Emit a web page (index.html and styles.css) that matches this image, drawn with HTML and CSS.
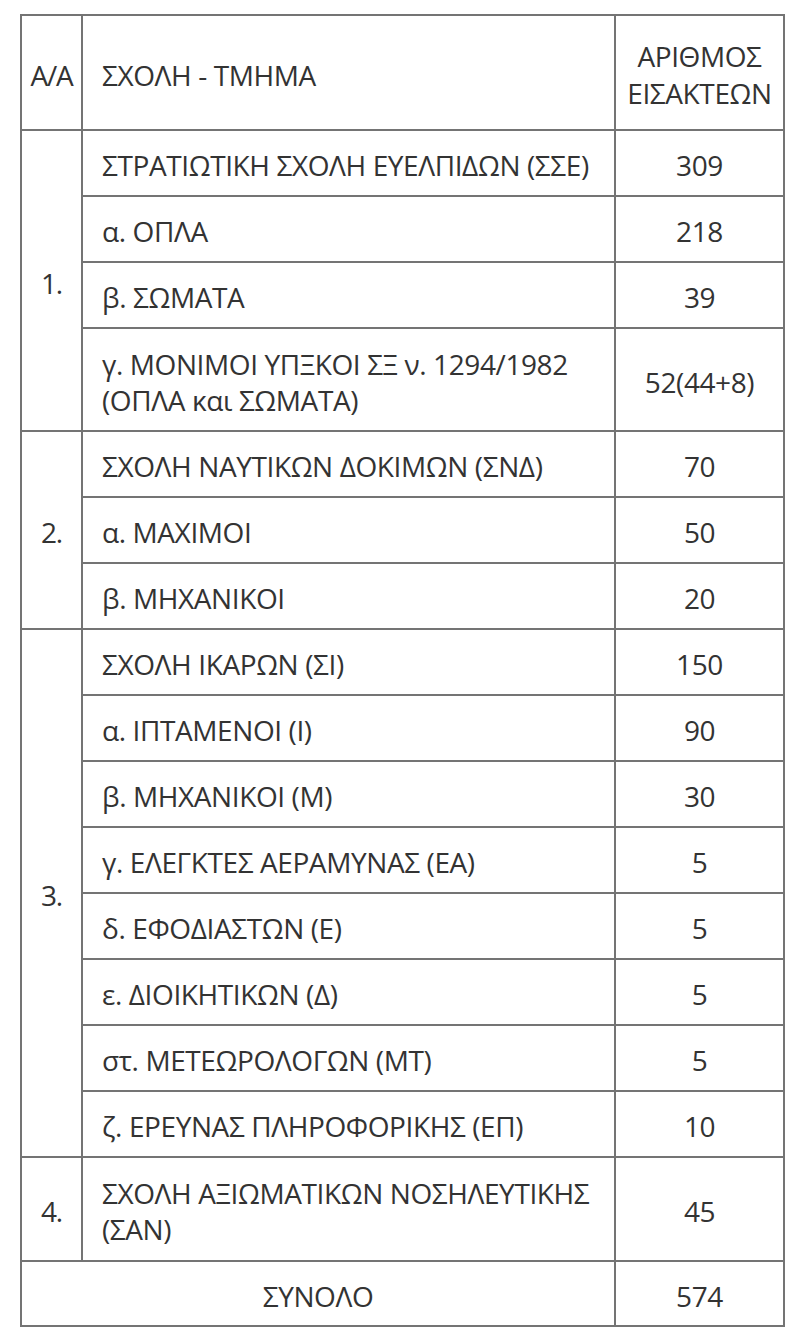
FILE: index.html
```html
<!DOCTYPE html>
<html lang="el">
<head>
<meta charset="utf-8">
<title>Αριθμός εισακτέων</title>
<link rel="stylesheet" href="styles.css">
</head>
<body>
<div class="page">
<table class="quota">
  <colgroup>
    <col class="c-aa">
    <col class="c-name">
    <col class="c-num">
  </colgroup>
  <thead>
    <tr class="h-head">
      <th class="aa">Α/Α</th>
      <th class="name">ΣΧΟΛΗ - ΤΜΗΜΑ</th>
      <th class="num head-num">ΑΡΙΘΜΟΣ<br>ΕΙΣΑΚΤΕΩΝ</th>
    </tr>
  </thead>
  <tbody>
    <tr class="h1"><td class="aa" rowspan="4">1.</td><td class="name">ΣΤΡΑΤΙΩΤΙΚΗ ΣΧΟΛΗ ΕΥΕΛΠΙΔΩΝ (ΣΣΕ)</td><td class="num">309</td></tr>
    <tr class="h1"><td class="name">α. ΟΠΛΑ</td><td class="num">218</td></tr>
    <tr class="h1"><td class="name">β. ΣΩΜΑΤΑ</td><td class="num">39</td></tr>
    <tr class="h2"><td class="name">γ. ΜΟΝΙΜΟΙ ΥΠΞΚΟΙ ΣΞ ν. 1294/1982<br>(ΟΠΛΑ και ΣΩΜΑΤΑ)</td><td class="num">52(44+8)</td></tr>

    <tr class="h1"><td class="aa" rowspan="3">2.</td><td class="name">ΣΧΟΛΗ ΝΑΥΤΙΚΩΝ ΔΟΚΙΜΩΝ (ΣΝΔ)</td><td class="num">70</td></tr>
    <tr class="h1"><td class="name">α. ΜΑΧΙΜΟΙ</td><td class="num">50</td></tr>
    <tr class="h1"><td class="name">β. ΜΗΧΑΝΙΚΟΙ</td><td class="num">20</td></tr>

    <tr class="h1"><td class="aa" rowspan="8">3.</td><td class="name">ΣΧΟΛΗ ΙΚΑΡΩΝ (ΣΙ)</td><td class="num">150</td></tr>
    <tr class="h1"><td class="name">α. ΙΠΤΑΜΕΝΟΙ (Ι)</td><td class="num">90</td></tr>
    <tr class="h1"><td class="name">β. ΜΗΧΑΝΙΚΟΙ (Μ)</td><td class="num">30</td></tr>
    <tr class="h1"><td class="name">γ. ΕΛΕΓΚΤΕΣ ΑΕΡΑΜΥΝΑΣ (ΕΑ)</td><td class="num">5</td></tr>
    <tr class="h1"><td class="name">δ. ΕΦΟΔΙΑΣΤΩΝ (Ε)</td><td class="num">5</td></tr>
    <tr class="h1"><td class="name">ε. ΔΙΟΙΚΗΤΙΚΩΝ (Δ)</td><td class="num">5</td></tr>
    <tr class="h1"><td class="name">στ. ΜΕΤΕΩΡΟΛΟΓΩΝ (ΜΤ)</td><td class="num">5</td></tr>
    <tr class="h1"><td class="name">ζ. ΕΡΕΥΝΑΣ ΠΛΗΡΟΦΟΡΙΚΗΣ (ΕΠ)</td><td class="num">10</td></tr>

    <tr class="h2b"><td class="aa">4.</td><td class="name">ΣΧΟΛΗ ΑΞΙΩΜΑΤΙΚΩΝ ΝΟΣΗΛΕΥΤΙΚΗΣ<br>(ΣΑΝ)</td><td class="num">45</td></tr>
    <tr class="h-total"><td class="total" colspan="2">ΣΥΝΟΛΟ</td><td class="num">574</td></tr>
  </tbody>
</table>
</div>
</body>
</html>
```

FILE: styles.css
```css
html, body {
  margin: 0;
  padding: 0;
  background: #ffffff;
}

.page {
  padding: 14px 0 0 20px;
}

.quota {
  border-collapse: collapse;
  table-layout: fixed;
  width: 763px;
  font-family: "Open Sans", "Noto Sans", sans-serif;
  font-size: 28px;
  line-height: 36px;
  color: #333333;
  letter-spacing: -0.4px;
}

.c-aa { width: 61px; }
.c-name { width: 533px; }
.c-num { width: 169px; }

.quota th,
.quota td {
  border: 2px solid #747474;
  padding: 4px 0 0 0;
  font-weight: 400;
  vertical-align: middle;
}

.quota .aa {
  text-align: center;
  letter-spacing: -1.2px;
}

.quota .name {
  text-align: left;
  padding-left: 19px;
}

.quota .num {
  text-align: center;
}

.quota .head-num {
  line-height: 37px;
}

.quota .total {
  text-align: center;
}

.h-head { height: 115px; }
.h1 { height: 66px; }
.h2 { height: 103px; }
.h2b { height: 104px; }
.h-total { height: 65px; }
```
